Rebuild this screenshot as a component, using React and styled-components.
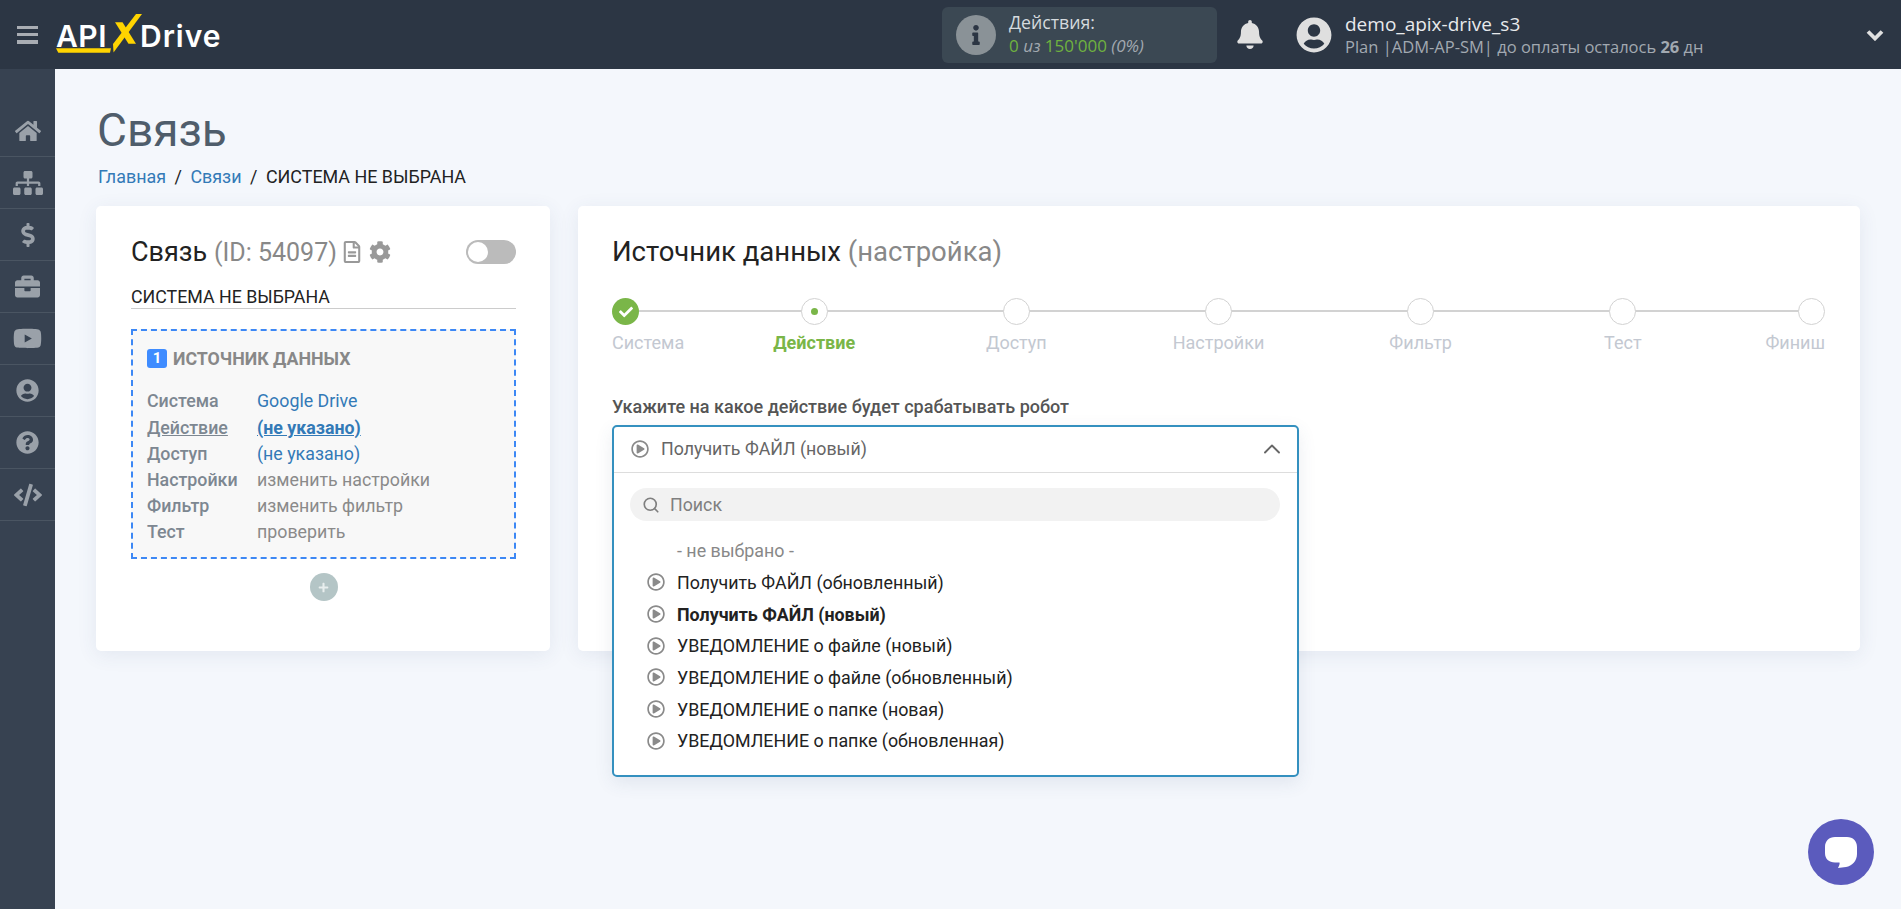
import React from 'react';
import styled, { createGlobalStyle } from 'styled-components';
import {
  FaHome, FaSitemap, FaDollarSign, FaBriefcase, FaYoutube, FaUserCircle, FaQuestionCircle, FaCode,
  FaBell, FaInfo, FaRegFileAlt, FaCog, FaCheck, FaRegPlayCircle, FaPlus,
} from 'react-icons/fa';
import { ChevronUp, Search } from 'lucide-react';

const Global = createGlobalStyle`
  html, body { margin: 0; padding: 0; background: #f4f7fc; }
  body { font-family: Roboto, "Liberation Sans", sans-serif; color: #222; overflow: hidden; }
  * { box-sizing: border-box; }
`;

const Page = styled.div`
  width: 1901px; height: 909px; display: flex; flex-direction: column; position: relative; overflow: hidden;
`;

const Header = styled.header`
  height: 69px; flex: none; background: #2c3644; display: flex; align-items: center;
  font-family: "Open Sans", "Liberation Sans", sans-serif;
`;
const Burger = styled.div`
  width: 21px; height: 18px; margin-left: 17px; display: flex; flex-direction: column; justify-content: space-between;
  span { display: block; height: 3.5px; background: #a9adb3; }
`;
const Logo = styled.div`
  margin-left: 17px; width: 170px; height: 42px; flex: none; display: flex; align-items: center; position: relative;
  font-family: Inter, "Open Sans", sans-serif; font-weight: 600; font-size: 30px; color: #fff;
`;
const LogoApi = styled.span`
  width: 85px; padding-left: 1px; line-height: 42px; margin-top: 3px; letter-spacing: 0.5px;
`;
const LogoDrive = styled.span`
  line-height: 42px; margin-top: 3px; letter-spacing: 1px;
`;
const LogoMark = styled.svg`
  position: absolute; left: 0; top: 0;
`;
const Actions = styled.div`
  margin-left: 717px; width: 275px; height: 56px; flex: none; border-radius: 6px; background: #3b4853; display: flex; align-items: center; padding-left: 14px;
`;
const InfoDot = styled.div`
  width: 40px; height: 40px; border-radius: 50%; background: #8a9297; color: #2c3644; display: flex; align-items: center; justify-content: center; font-size: 20px;
`;
const ActionText = styled.div`
  margin: -2px 0 0 13px; display: flex; flex-direction: column; font-size: 17.7px; line-height: 23px; color: #d5dade;
`;
const Count = styled.div`
  font-size: 17px; color: #6fb23f; white-space: pre;
  em { color: #a2a9b0; font-style: italic; }
`;
const BellWrap = styled.div`
  margin-left: 20px; width: 26px; color: #e0e0e0; font-size: 29px; display: flex; justify-content: center;
`;
const Avatar = styled.div`
  margin-left: 33px; width: 36px; height: 36px; color: #dfdfdf; font-size: 36px; display: flex;
`;
const UserText = styled.div`
  margin-left: 13px; display: flex; flex-direction: column;
`;
const UserName = styled.div`
  font-size: 19px; line-height: 25px; color: #e8eaec;
`;
const UserPlan = styled.div`
  font-size: 16.5px; line-height: 20px; color: #a2a9b1; white-space: nowrap;
  b { font-weight: 700; }
`;
const HeaderCaret = styled.svg`
  margin-left: auto; margin-right: 17px; color: #e0e0e0;
`;

const Body = styled.div`
  flex: 1; display: flex; min-height: 0;
`;
const Side = styled.nav`
  width: 55px; flex: none; background: #374251; padding-top: 36px;
`;
const SideItem = styled.div`
  height: 52px; display: flex; align-items: center; justify-content: center; color: #9aa1a9; font-size: ${p => p.$size}px;
  border-bottom: 1px solid #4a5562;
`;

const Main = styled.main`
  flex: 1; padding: 36px 41px 0; min-width: 0;
`;
const PageTitle = styled.h1`
  margin: 0 0 0 1px; font-size: 46px; line-height: 50px; font-weight: 400; color: #4f5d6b;
`;
const Crumbs = styled.div`
  margin: 10px 0 0 2px; font-size: 17.9px; line-height: 24px; display: flex; color: #222;
  a { color: #337ab7; text-decoration: none; }
  i { font-style: normal; margin: 0 8.5px; }
`;
const Cards = styled.div`
  margin-top: 17px; display: flex; gap: 28px;
`;
const Card = styled.section`
  height: 445px; background: #fff; border-radius: 5px; box-shadow: 0 4px 20px rgba(60, 80, 120, 0.09);
`;
const LeftCard = styled(Card)`
  width: 454px; flex: none; padding: 30px 34px 0 35px;
`;
const RightCard = styled(Card)`
  flex: 1; padding: 30px 35px 0 34px; min-width: 0;
`;
const TitleRow = styled.div`
  display: flex; align-items: center; height: 32px;
`;
const ConnTitle = styled.h2`
  margin: 0; font-size: 27px; line-height: 32px; font-weight: 400; color: #222; white-space: nowrap;
  span { color: #888; font-size: 25px; }
`;
const SourceTitle = styled.h2`
  margin: 0; font-size: 27.5px; line-height: 32px; font-weight: 400; color: #222; white-space: nowrap;
  span { color: #888; }
`;
const TitleIcons = styled.div`
  margin-left: 4px; display: flex; align-items: center; gap: 6px; color: #999; font-size: 22px;
`;
const Toggle = styled.div`
  margin-left: auto; width: 50px; height: 24px; border-radius: 12px; background: #bbb; padding: 2px; 
  &::before { content: ''; display: block; width: 20px; height: 20px; border-radius: 50%; background: #fff; }
`;
const NameField = styled.div`
  margin-top: 17px; height: 24px; border-bottom: 1px solid #ccc; font-size: 17.8px; line-height: 23px; color: #222;
`;
const SourceBox = styled.div`
  margin-top: 20px; height: 230px; border: 2px dashed #3d88f5; background: #f8f8f8; padding: 17px 14px 0;
`;
const BoxHead = styled.div`
  display: flex; align-items: center; height: 20px; font-size: 17.8px; font-weight: 700; color: #888; gap: 6px;
`;
const Badge = styled.span`
  width: 20px; height: 19px; border-radius: 3px; background: #3f8cff; color: #fff; font-size: 15px; font-weight: 700; display: flex; align-items: center; justify-content: center;
`;
const BoxRows = styled.div`
  margin-top: 20px; display: grid; grid-template-columns: 110px 1fr; grid-template-rows: 27px repeat(5, 26px); font-size: 17.8px; line-height: 26px;
`;
const RowLabel = styled.div`
  color: #7d8791; font-weight: 500; text-decoration: ${p => (p.$on ? 'underline' : 'none')};
  justify-self: start;
`;
const RowValue = styled.div`
  color: ${p => (p.$link ? '#337ab7' : '#8a8a8a')};
  font-weight: ${p => (p.$on ? 700 : 400)};
  text-decoration: ${p => (p.$on ? 'underline' : 'none')};
`;
const AddButton = styled.div`
  margin: 14px auto 0; width: 28px; height: 28px; border-radius: 50%; background: #b4c5c6; color: #e8eeee; font-size: 11px; display: flex; align-items: center; justify-content: center;
`;

const Stepper = styled.div`
  margin-top: 30px; position: relative; display: grid; grid-template-columns: 1fr 2fr 2fr 2fr 2fr 2fr 1fr;
  &::before { content: ''; position: absolute; left: 13px; right: 13px; top: 12px; height: 2px; background: #d2d2d2; }
`;
const Step = styled.div`
  display: flex; flex-direction: column; position: relative;
  align-items: ${p => p.$align || 'center'};
`;
const Dot = styled.div`
  width: 27px; height: 27px; border-radius: 50%; background: ${p => (p.$done ? '#7ab648' : '#fff')};
  border: ${p => (p.$done ? 'none' : '1.5px solid #d2d2d2')}; color: #fff; font-size: 14px;
  display: flex; align-items: center; justify-content: center;
  &::after { content: ''; display: ${p => (p.$active ? 'block' : 'none')}; width: 7px; height: 7px; border-radius: 50%; background: #7ab648; }
`;
const StepLabel = styled.div`
  margin-top: 6px; font-size: 18px; line-height: 24px; white-space: nowrap; color: ${p => (p.$active ? '#7ab648' : '#c3c8d1')}; font-weight: ${p => (p.$active ? 700 : 400)};
`;
const FieldLabel = styled.div`
  margin-top: 40px; font-size: 18px; line-height: 24px; font-weight: 500; color: #555;
`;
const SelectBox = styled.div`
  margin-top: 6px; width: 687px; height: 352px; background: #fff; border: 2px solid #3490bf; border-radius: 5px; box-shadow: 0 6px 18px rgba(60, 80, 120, 0.1); position: relative;
`;
const SelectHead = styled.div`
  height: 46px; border-bottom: 1px solid #ddd; display: flex; align-items: center; padding: 0 11px 2px 17px; color: #666; font-size: 17.8px; gap: 12px;
`;
const PlayIcon = styled(FaRegPlayCircle)`
  font-size: 18px; color: #8a8a8a; flex: none;
`;
const HeadCaret = styled.span`
  margin-left: auto; display: flex; color: #666;
`;
const SearchBar = styled.div`
  margin: 15px 0 0 16px; width: 650px; height: 33px; border-radius: 17px; background: #f2f2f2; display: flex; align-items: center; padding-left: 12px; gap: 10px; color: #7f7f7f; font-size: 17.8px;
`;
const Options = styled.div`
  margin-top: 14px; display: flex; flex-direction: column;
`;
const Option = styled.div`
  height: 31.65px; display: flex; align-items: center; padding-left: 33px; gap: 12px; font-size: 17.85px; color: ${p => (p.$muted ? '#888' : '#222')}; font-weight: ${p => (p.$on ? 700 : 400)}; white-space: nowrap;
`;
const NoIcon = styled.span`
  width: 18px; flex: none;
`;
const Chat = styled.div`
  position: absolute; left: 1808px; top: 819px; width: 66px; height: 66px; border-radius: 50%; background: #5b5bbd; display: flex; align-items: center; justify-content: center;
`;

const sideItems = [
  [FaHome, 26], [FaSitemap, 30], [FaDollarSign, 24], [FaBriefcase, 25], [FaYoutube, 29], [FaUserCircle, 23], [FaQuestionCircle, 23], [FaCode, 28],
];
const rows = [
  ['Система', 'Google Drive', true, false],
  ['Действие', '(не указано)', true, true],
  ['Доступ', '(не указано)', true, false],
  ['Настройки', 'изменить настройки', false, false],
  ['Фильтр', 'изменить фильтр', false, false],
  ['Тест', 'проверить', false, false],
];
const steps = ['Система', 'Действие', 'Доступ', 'Настройки', 'Фильтр', 'Тест', 'Финиш'];
const options = ['Получить ФАЙЛ (обновленный)', 'Получить ФАЙЛ (новый)', 'УВЕДОМЛЕНИЕ о файле (новый)', 'УВЕДОМЛЕНИЕ о файле (обновленный)', 'УВЕДОМЛЕНИЕ о папке (новая)', 'УВЕДОМЛЕНИЕ о папке (обновленная)'];

export default function App() {
  return (
    <Page>
      <Global />
      <Header>
        <Burger><span /><span /><span /></Burger>
        <Logo>
          <LogoApi>API</LogoApi>
          <LogoDrive>Drive</LogoDrive>
          <LogoMark width="170" height="42" viewBox="0 0 170 42">
            <path d="M1 34.2 L56 34.2 L55 38.8 L3.3 38.8 Z" fill="#ffd400" />
            <path d="M81 0 L87 0 L58.5 38.5 L58 30 Z" fill="#ffd400" />
            <path d="M60 8.2 L67.5 8.2 L81 29.8 L73.5 29.8 Z" fill="#ffd400" />
          </LogoMark>
        </Logo>
        <Actions>
          <InfoDot><FaInfo /></InfoDot>
          <ActionText>
            Действия:
            <Count>0 <em>из</em> 150'000 <em>(0%)</em></Count>
          </ActionText>
        </Actions>
        <BellWrap><FaBell /></BellWrap>
        <Avatar><FaUserCircle /></Avatar>
        <UserText>
          <UserName>demo_apix-drive_s3</UserName>
          <UserPlan>Plan |ADM-AP-SM| до оплаты осталось <b>26</b> дн</UserPlan>
        </UserText>
        <HeaderCaret width="18" height="12" viewBox="0 0 18 12">
          <polyline points="2,2.5 9,9.5 16,2.5" fill="none" stroke="currentColor" strokeWidth="3.8" />
        </HeaderCaret>
      </Header>
      <Body>
        <Side>
          {sideItems.map(([Icon, size], i) => <SideItem key={i} $size={size}><Icon /></SideItem>)}
        </Side>
        <Main>
          <PageTitle>Связь</PageTitle>
          <Crumbs><a>Главная</a><i>/</i><a>Связи</a><i>/</i>СИСТЕМА НЕ ВЫБРАНА</Crumbs>
          <Cards>
            <LeftCard>
              <TitleRow>
                <ConnTitle>Связь <span>(ID: 54097)</span></ConnTitle>
                <TitleIcons><FaRegFileAlt /><FaCog /></TitleIcons>
                <Toggle />
              </TitleRow>
              <NameField>СИСТЕМА НЕ ВЫБРАНА</NameField>
              <SourceBox>
                <BoxHead><Badge>1</Badge>ИСТОЧНИК ДАННЫХ</BoxHead>
                <BoxRows>
                  {rows.map(([l, v, link, on]) => (
                    <React.Fragment key={l}>
                      <RowLabel $on={on}>{l}</RowLabel>
                      <RowValue $link={link} $on={on}>{v}</RowValue>
                    </React.Fragment>
                  ))}
                </BoxRows>
              </SourceBox>
              <AddButton><FaPlus /></AddButton>
            </LeftCard>
            <RightCard>
              <SourceTitle>Источник данных <span>(настройка)</span></SourceTitle>
              <Stepper>
                {steps.map((s, i) => (
                  <Step key={s} $align={i === 0 ? 'flex-start' : i === 6 ? 'flex-end' : 'center'}>
                    <Dot $done={i === 0} $active={i === 1}>{i === 0 && <FaCheck />}</Dot>
                    <StepLabel $active={i === 1}>{s}</StepLabel>
                  </Step>
                ))}
              </Stepper>
              <FieldLabel>Укажите на какое действие будет срабатывать робот</FieldLabel>
              <SelectBox>
                <SelectHead>
                  <PlayIcon />Получить ФАЙЛ (новый)
                  <HeadCaret><ChevronUp size={28} strokeWidth={1.6} /></HeadCaret>
                </SelectHead>
                <SearchBar><Search size={18} strokeWidth={2.2} />Поиск</SearchBar>
                <Options>
                  <Option $muted><NoIcon />- не выбрано -</Option>
                  {options.map((o, i) => <Option key={o} $on={i === 1}><PlayIcon />{o}</Option>)}
                </Options>
              </SelectBox>
            </RightCard>
          </Cards>
        </Main>
      </Body>
      <Chat>
        <svg width="34" height="34" viewBox="0 0 34 34">
          <path d="M11 2 H23 C29 2 33 6 33 12 V19 C33 26 28 31 22 32 L14 33 C15 31 16 29 15.5 27.5 H11 C5 27.5 1 24 1 18 V12 C1 6 5 2 11 2 Z" fill="#fff" />
        </svg>
      </Chat>
    </Page>
  );
}
